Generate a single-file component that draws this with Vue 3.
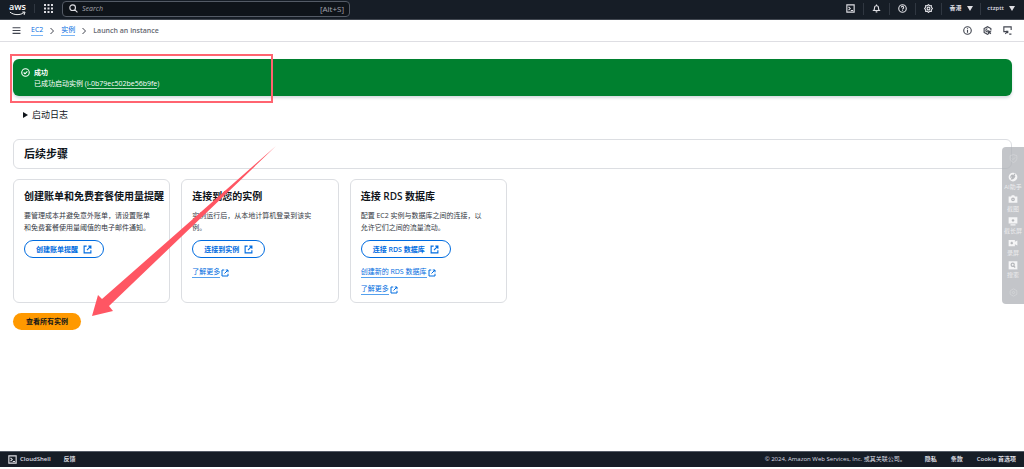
<script setup>
import { h } from 'vue'

const paths = {
  shell: 'M1.5 1.5h13v13h-13zM4.5 5l3 3-3 3M8.5 11.5h4',
  bell: 'M3 11.5c1-1 1.5-2 1.5-5a3.500 3.500 0 0 1 7 0c0 3 .5 4 1.500 5zM6.500 14h3M8 1v2',
  help: 'M8 1.300a6.700 6.700 0 1 0 0 13.400a6.700 6.700 0 1 0 0-13.400M6 6.300a2 2 0 1 1 3.200 1.600C8.400 8.500 8 8.800 8 9.800M8 11v1.500',
  gear: 'M8 1l2 2 3-.2.2 3L15 8l-1.800 2.200-.2 3-3-.2-2 2-2-2-3 .2-.2-3L1 8l1.800-2.200.2-3 3 .2zM8 5.500a2.500 2.500 0 1 0 0 5a2.500 2.500 0 1 0 0-5',
  info: 'M8 1.300a6.700 6.700 0 1 0 0 13.400a6.700 6.700 0 1 0 0-13.400M8 4v1.700M8 7v5',
  hexagon: 'M14 8V4.600L8 1.200 2 4.600v6.800l6 3.400 1.500-.8M8 5a3 3 0 0 0-1 5.800M8 8l6.500 2.500M8 8l2.500 6.500M10 10l4 4',
  feedback: 'M5 10H1.500V1.500h13V7M4 14l4-4M5 9.500h3.500V13M11 14.500h4',
  check: 'M8 1.300a6.700 6.700 0 1 0 0 13.400a6.700 6.700 0 1 0 0-13.400M4.800 8l2.300 2.300L11.300 6',
  external: 'M6.500 2H2v12h12V9.500M9.500 2H14v4.500M14 2L7 9',
  chevron: 'M5 2l6 6-6 6',
  menu: 'M1 3h14M1 8h14M1 13h14',
  search: 'M6.500 1.500a5 5 0 1 0 0 10a5 5 0 1 0 0-10M10.500 10.500L15 15',
  shield: 'M8 1l6 2v5c0 3-2.500 5.500-6 7-3.500-1.500-6-4-6-7V3zM5 8l2 2 4-4',
  target: 'M8 1.500l6 3.500v6l-6 3.500L2 11V5zM8 6a2 2 0 1 0 0 4a2 2 0 1 0 0-4'
}

const Icon = (props) =>
  h('svg', { viewBox: '0 0 16 16', class: 'icon', 'aria-hidden': 'true' }, [h('path', { d: paths[props.name] })])
Icon.props = ['name']

const cards = [
  {
    title: '创建账单和免费套餐使用量提醒',
    lines: ['要管理成本并避免意外账单，请设置账单', '和免费套餐使用量阈值的电子邮件通知。'],
    action: '创建账单提醒',
    links: []
  },
  {
    title: '连接到您的实例',
    lines: ['实例运行后，从本地计算机登录到该实', '例。'],
    action: '连接到实例',
    links: ['了解更多']
  },
  {
    title: '连接 RDS 数据库',
    lines: ['配置 EC2 实例与数据库之间的连接，以', '允许它们之间的流量流动。'],
    action: '连接 RDS 数据库',
    links: ['创建新的 RDS 数据库', '了解更多']
  }
]
const tools = [
  { label: 'AI助手', body: 'M8 1a7 7 0 1 0 0 14a7 7 0 1 0 0-14', mark: 'M4 9c2-5 4-5 3-1s2 4 4-2M5 12l6-9' },
  { label: '截图', body: 'M1 4h4l1-2h4l1 2h4v10H1z', mark: 'M8 6.500a2 2 0 1 0 0 4a2 2 0 1 0 0-4' },
  { label: '截长屏', body: 'M1 2h14v10H1zM4 13h8v2H4z', mark: 'M8 5v4M6 7h4' },
  { label: '录屏', body: 'M1 3h10v3l4-2v8l-4-2v3H1z', mark: 'M6 6v4M4 8h4' },
  { label: '搜索', body: 'M1 2h14v13H1z', mark: 'M7.500 5a2.500 2.500 0 1 0 0 5a2.500 2.500 0 1 0 0-5M9.500 10l2 2' }
]
</script>

<template>
  <div class="page">
    <header class="topbar">
      <a class="logo" href="#" aria-label="aws">
        <span>aws</span>
        <svg viewBox="0 0 18 5" aria-hidden="true"><path d="M1 1c4 3.500 11 3.500 15 .500M14 1h3l-1 3" /></svg>
      </a>
      <button class="grid-button" aria-label="Services">
        <svg viewBox="0 0 9 9" aria-hidden="true">
          <path d="M0 0h2v2H0zM3.500 0h2v2h-2zM7 0h2v2H7zM0 3.500h2v2H0zM3.500 3.500h2v2h-2zM7 3.500h2v2H7zM0 7h2v2H0zM3.500 7h2v2h-2zM7 7h2v2H7z" />
        </svg>
      </button>
      <label class="search">
        <Icon name="search" />
        <input type="search" placeholder="Search" aria-label="Search" />
        <span>[Alt+S]</span>
      </label>
      <nav class="tools">
        <button aria-label="CloudShell"><Icon name="shell" /></button>
        <button aria-label="Notifications"><Icon name="bell" /></button>
        <button aria-label="Help"><Icon name="help" /></button>
        <button aria-label="Settings"><Icon name="gear" /></button>
        <button class="wide">香港<i class="caret"></i></button>
        <button class="wide user">ctzptt<i class="caret"></i></button>
      </nav>
    </header>

    <div class="crumbbar">
      <button class="menu" aria-label="Menu"><Icon name="menu" /></button>
      <nav class="crumbs">
        <a href="#">EC2</a><Icon name="chevron" /><a href="#">实例</a><Icon name="chevron" />
        <span>Launch an instance</span>
      </nav>
      <div class="panel-tools">
        <button aria-label="Info"><Icon name="info" /></button>
        <button aria-label="Diagnostics"><Icon name="hexagon" /></button>
        <button aria-label="Feedback"><Icon name="feedback" /></button>
      </div>
    </div>

    <main>
      <section class="banner">
        <Icon name="check" />
        <div>
          <strong>成功</strong>
          <p>已成功启动实例 (<a href="#">i-0b79ec502be56b9fe</a>)</p>
        </div>
      </section>
      <button class="log"><i></i>启动日志</button>
      <section class="steps"><h1>后续步骤</h1></section>
      <section class="cards">
        <article v-for="card in cards" :key="card.title" class="card">
          <h2>{{ card.title }}</h2>
          <p><span v-for="line in card.lines" :key="line">{{ line }}</span></p>
          <button class="action">{{ card.action }}<Icon name="external" /></button>
          <a v-for="link in card.links" :key="link" class="more" href="#"><span>{{ link }}</span><Icon name="external" /></a>
        </article>
      </section>
      <button class="primary">查看所有实例</button>
      <div class="highlight"></div>
      <svg class="arrow" viewBox="0 0 186 170" aria-hidden="true">
        <path d="M185 0L18 160l4 5-21 5 6-21 4 4z" />
      </svg>
    </main>

    <aside class="dock">
      <Icon name="shield" />
      <div class="dock-items">
        <button v-for="tool in tools" :key="tool.label">
          <svg viewBox="0 0 16 16" aria-hidden="true"><path class="body" :d="tool.body" /><path class="mark" :d="tool.mark" /></svg>
          {{ tool.label }}
        </button>
      </div>
      <Icon name="target" />
    </aside>

    <footer>
      <button><Icon name="shell" />CloudShell</button>
      <button>反馈</button>
      <span>© 2024, Amazon Web Services, Inc. 或其关联公司。</span>
      <a href="#">隐私</a><a href="#">条款</a><a href="#">Cookie 首选项</a>
    </footer>
  </div>
</template>

<style>
body { margin: 0; background: #fff; }
</style>

<style scoped>
* { box-sizing: border-box; }
.page { position: relative; display: flex; flex-direction: column; min-height: 100vh; padding-bottom: 2px; color: #0f141a; font: 7px/11px "Open Sans", "Noto Sans CJK SC", sans-serif; }
button, input { padding: 0; border: 0; background: none; color: inherit; font: inherit; }
h1, h2, p { margin: 0; }
a { color: #006ce0; text-decoration: none; }
.icon { flex: none; width: 9px; height: 9px; fill: none; stroke: currentColor; stroke-width: 2; }
.topbar { display: flex; align-items: center; height: 20px; padding: 0 9px 2px; background: #161d26; border-bottom: 1px solid #414750; color: #dedee3; }
.logo { display: flex; flex-direction: column; width: 17px; color: #fff; font-size: 9px; line-height: 9px; font-weight: 600; }
.logo svg { width: 17px; height: 5px; fill: none; stroke: #fff; stroke-width: 1; }
.grid-button { display: flex; margin-left: 8px; padding-left: 9px; border-left: 1px solid #303741; }
.grid-button svg { width: 9px; height: 9px; fill: currentColor; }
.search { display: flex; align-items: center; width: 288px; height: 16px; margin-left: 9px; padding: 0 5px 0 6px; gap: 4px; border: 1px solid #545b66; border-radius: 4px; background: #0f141a; }
.search input { flex: 1; min-width: 0; outline: 0; font-style: italic; }
.search input::placeholder { color: #a4a4ad; }
.search > span { color: #a4a4ad; font-size: 8px; }
.tools { display: flex; align-items: center; margin-left: auto; font-size: 6px; font-weight: 600; }
.tools button { display: flex; align-items: center; justify-content: center; width: 26px; height: 12px; border-left: 1px solid #303741; }
.tools button:first-child { border: 0; }
.tools .wide { width: 39px; gap: 5px; }
.tools .user { width: 35px; justify-content: flex-end; }
.caret { border: 3px solid transparent; border-top: 5px solid currentColor; border-bottom: 0; }
.crumbbar { display: flex; align-items: center; height: 22px; padding: 0 12px; border-bottom: 1px solid #dedee3; color: #424650; }
.menu { display: flex; }
.crumbs { display: flex; align-items: center; gap: 5px; margin-left: 10px; }
.crumbs a { border-bottom: 1px solid #79b5f5; line-height: 10px; }
.crumbs .icon { width: 8px; height: 8px; }
.crumbs span { color: #656871; font-weight: 600; }
.panel-tools { display: flex; gap: 11px; margin-left: auto; }
.panel-tools button { display: flex; }
main { position: relative; display: flex; flex-direction: column; align-items: flex-start; padding: 17px 12px 0 13px; }
.banner { display: flex; align-self: stretch; gap: 4px; padding: 8px 8px 7px; border-radius: 6px; background: #00802f; box-shadow: 0 2px 3px #d5dce0; color: #fff; }
.banner .icon { margin-top: 1px; }
.banner strong { display: block; }
.banner a { border-bottom: 1px solid #b5dcbf; color: inherit; }
.log { display: flex; align-items: center; gap: 4px; margin: 12px 0 0 10px; font-size: 9px; line-height: 13px; }
.log i { border: 3px solid transparent; border-left: 5px solid #0f141a; border-right: 0; }
.steps { align-self: stretch; margin-top: 18px; padding: 7px 10px; border: 1px solid #dcdee2; border-radius: 6px; }
h1 { font-size: 11px; line-height: 14px; font-weight: 600; }
.cards { display: grid; grid-template-columns: repeat(6, minmax(0, 1fr)); align-self: stretch; gap: 11px; margin-top: 10px; }
.card { display: flex; flex-direction: column; align-items: flex-start; min-height: 124px; padding: 9px 10px 7px; border: 1px solid #dcdee2; border-radius: 6px; white-space: nowrap; }
h2 { margin-bottom: 7px; font-size: 10px; line-height: 14px; font-weight: 600; }
.card p { color: #333843; line-height: 12px; }
.card p span { display: block; }
.action { display: flex; align-items: center; gap: 5px; height: 18px; margin: 6px 0 3px; padding: 0 11px; border: 1px solid #006ce0; border-radius: 9px; color: #006ce0; font-weight: 600; }
.more { display: flex; align-items: center; gap: 1px; margin-top: 6px; }
.more span { border-bottom: 1px solid #55a0ed; line-height: 10px; }
.more .icon { width: 8px; height: 8px; }
.primary { height: 17px; margin-top: 10px; padding: 0 13px; border-radius: 9px; background: #ff9900; font-weight: 600; }
.highlight { position: absolute; top: 12px; left: 10px; width: 263px; height: 49px; border: 2px solid #ff6470; }
.arrow { position: absolute; top: 104px; left: 91px; width: 186px; height: 170px; fill: #ff5663; }
.dock { position: absolute; top: 147px; right: 0; display: flex; flex-direction: column; align-items: center; gap: 9px; width: 22px; padding: 7px 0; border-radius: 4px 0 0 4px; background: rgba(175, 178, 183, .75); color: #dadbde; font-size: 6px; line-height: 8px; white-space: nowrap; }
.dock-items { display: flex; flex-direction: column; gap: 3px; }
.dock button { display: flex; flex-direction: column; align-items: center; gap: 1px; color: #ececee; }
.dock button svg { width: 10px; height: 10px; }
.dock .icon { stroke-width: 1; }
.body { fill: #f5f5f6; }
.mark { fill: none; stroke: #b5b7bb; stroke-width: 2; }
footer { display: flex; align-items: center; height: 16px; margin-top: auto; padding: 0 8px; background: #161d26; border-top: 1px solid #545b66; color: #dedee3; font-size: 6px; font-weight: 600; }
footer button { display: flex; align-items: center; gap: 3px; margin-right: 13px; }
footer span { margin-left: auto; margin-right: 5px; font-weight: 400; }
footer a { margin-left: 14px; color: inherit; }
</style>
